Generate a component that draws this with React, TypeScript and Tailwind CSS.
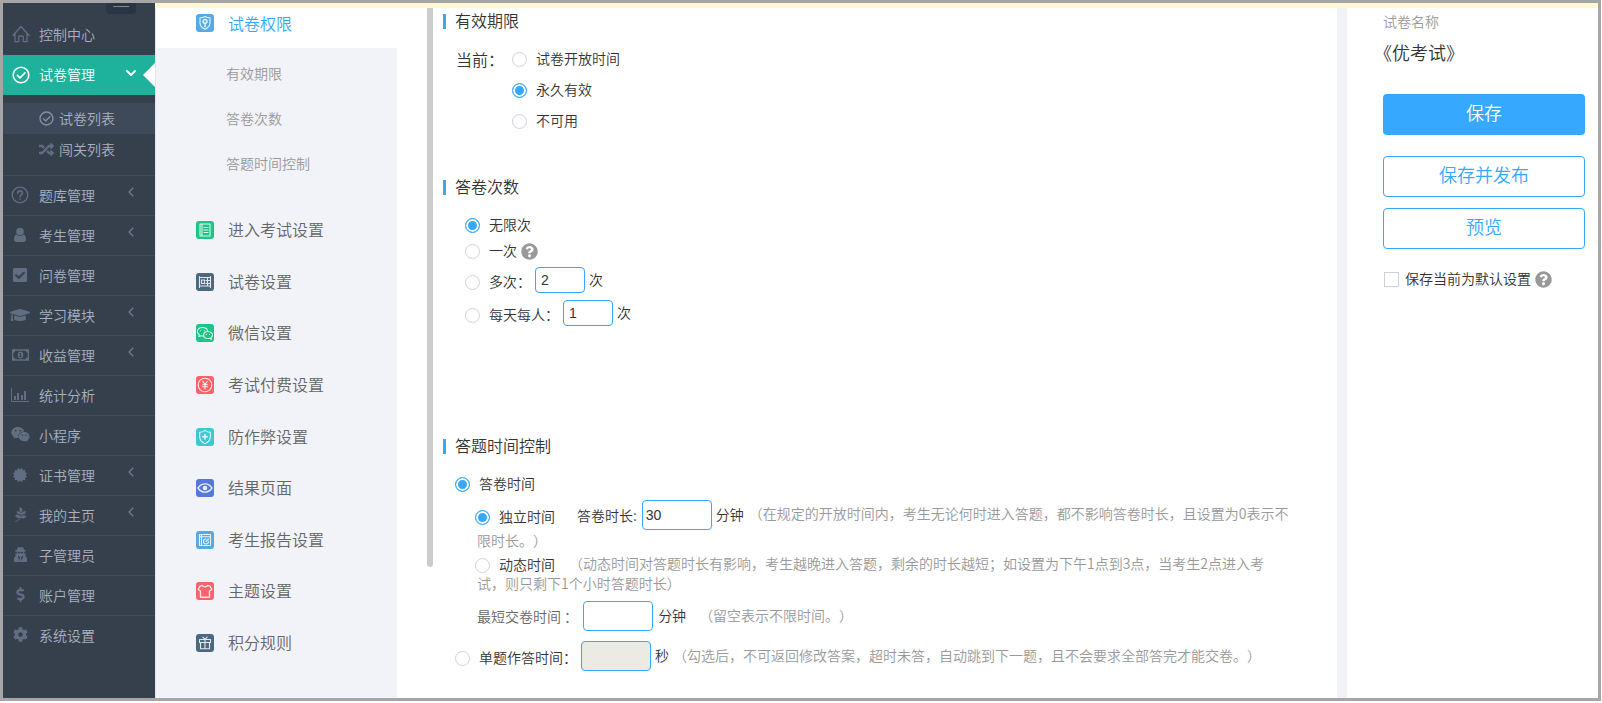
import { useState, type ReactNode } from "react";
import {
  FaCertificate,
  FaCheckSquare,
  FaCog,
  FaDollarSign,
  FaGraduationCap,
  FaPagelines,
  FaQuestionCircle,
  FaRandom,
  FaUserSecret,
  FaWeixin,
} from "react-icons/fa";

const stroke = {
  fill: "none",
  stroke: "currentColor",
  strokeLinecap: "round",
  strokeLinejoin: "round",
} as const;

const HomeIcon = () => (
  <svg viewBox="0 0 18 18" className="size-[18px]" {...stroke} strokeWidth={1.2}>
    <path d="M1 10.5 9 1.5l8 9M3 8.5v8.2h3.8v-5.5h4.4v5.5H15V8.5" />
  </svg>
);

const CheckIcon = ({ className }: { className: string }) => (
  <svg viewBox="0 0 18 18" className={className} {...stroke} strokeWidth={1.6}>
    <circle cx="9" cy="9" r="7.8" />
    <path d="m5.4 9.4 2.6 2.5 5-5" />
  </svg>
);

const HelpIcon = () => (
  <svg viewBox="0 0 18 18" className="size-[18px]" {...stroke} strokeWidth={1.3}>
    <circle cx="9" cy="9" r="7.8" />
    <path d="M6.7 7.2c0-3.1 4.7-3 4.7-.2 0 1.8-2.3 1.8-2.3 3.8M9.1 13v.3" strokeWidth={1.6} />
  </svg>
);

const UserIcon = () => (
  <svg viewBox="0 0 14 16" className="h-[16px] w-[14px]" fill="currentColor">
    <circle cx="7" cy="4.6" r="3.8" />
    <path d="M3.8 7.4C1.7 7.6 1 10 1 12.6 1 14.2 2 15 3.3 15h7.4c1.3 0 2.3-.8 2.3-2.4 0-2.6-.7-5-2.8-5.2C8.5 9.5 5.5 9.5 3.8 7.4z" />
  </svg>
);

const MoneyIcon = () => (
  <svg viewBox="0 0 20 14" className="h-[14px] w-[19px]" fill="currentColor" fillRule="evenodd">
    <path d="M1 1h18v12H1zM4.6 2.4A2.4 2.4 0 0 1 2.4 4.6v4.8a2.4 2.4 0 0 1 2.2 2.2h10.8a2.4 2.4 0 0 1 2.2-2.2V4.6a2.4 2.4 0 0 1-2.2-2.2z" />
    <path d="M10 3.2c2 0 3 1.8 3 3.8s-1 3.8-3 3.8S7 9 7 7s1-3.8 3-3.8zM9.5 5l-1.2.9.5.6.6-.4v2.3h-.9v.8h2.8v-.8h-.8V5z" />
  </svg>
);

const ChartIcon = () => (
  <svg viewBox="0 0 20 16" className="h-[16px] w-[20px]" fill="currentColor">
    <path d="M1 1h1v13h17v1H1zM4 9h2v4H4zM7 6h2v7H7zM11 8h2v5h-2zM14 4h2v9h-2z" />
  </svg>
);

const Angle = ({ open }: { open?: boolean }) => (
  <svg
    viewBox="0 0 10 10"
    className={`mr-[19px] mb-[5px] ml-auto size-[10px] ${open ? "text-white" : "text-[#748094]"}`}
    {...stroke}
    strokeWidth={open ? 1.8 : 1.1}
  >
    <path d={open ? "M1 3l4 4 4-4" : "M7 1 3 5l4 4"} />
  </svg>
);

type NavItem = { label: string; icon: ReactNode; more?: boolean };

const navItems: NavItem[] = [
  { label: "题库管理", icon: <HelpIcon />, more: true },
  { label: "考生管理", icon: <UserIcon />, more: true },
  { label: "问卷管理", icon: <FaCheckSquare className="size-[16px]" /> },
  { label: "学习模块", icon: <FaGraduationCap className="size-[20px]" />, more: true },
  { label: "收益管理", icon: <MoneyIcon />, more: true },
  { label: "统计分析", icon: <ChartIcon /> },
  { label: "小程序", icon: <FaWeixin className="size-[19px]" /> },
  { label: "证书管理", icon: <FaCertificate className="size-[14px]" />, more: true },
  { label: "我的主页", icon: <FaPagelines className="size-[15px]" />, more: true },
  { label: "子管理员", icon: <FaUserSecret className="size-[15px]" /> },
  { label: "账户管理", icon: <FaDollarSign className="size-[15px]" /> },
  { label: "系统设置", icon: <FaCog className="size-[15px]" /> },
];

const Badge = ({ className, children }: { className: string; children: ReactNode }) => (
  <svg viewBox="0 0 18 18" className={`size-[18px] shrink-0 rounded-[3px] text-white/85 ${className}`} {...stroke} strokeWidth={1.1}>
    {children}
  </svg>
);

const settings: { label: string; icon: ReactNode }[] = [
  {
    label: "进入考试设置",
    icon: (
      <Badge className="bg-[#1dc486]">
        <path d="M4 3h10v12H4zM6 3v12M8 6.5h4M8 9h4M8 11.5h4" />
      </Badge>
    ),
  },
  {
    label: "试卷设置",
    icon: (
      <Badge className="bg-[#4a687e]">
        <path d="M3.5 3.5v11M3.5 4.5h11M14.5 3.5v11M3.5 13h11M5.5 7h3v3.5h-3zM11.5 4.5v8.5M10 7.5h4M10 10.5h4" />
      </Badge>
    ),
  },
  {
    label: "微信设置",
    icon: (
      <Badge className="bg-[#1dc486]">
        <path d="M7.5 12c-.9.1-1.8 0-2.6-.3l-2.1.9.5-1.9C-.2 8 1.5 3.5 6.3 3.5c3.2 0 5.2 1.9 5.5 4M12 7.500c-5.800 0-5.800 7 0 7 .6 0 1.100-.1 1.600-.2l1.700.9-.4-1.600c3.200-2.100 1.300-6.100-2.900-6.100zM4.700 6.500v.1M8.200 6.500v.1M10.300 10.300v.1M13.500 10.300v.1" />
      </Badge>
    ),
  },
  {
    label: "考试付费设置",
    icon: (
      <Badge className="bg-[#ff6169]">
        <circle cx="9" cy="9" r="6.8" />
        <path d="m6.8 5.5 2.2 3 2.2-3M9 8.5v4.2M6.6 8.8h4.8M6.6 10.8h4.8" />
      </Badge>
    ),
  },
  {
    label: "防作弊设置",
    icon: (
      <Badge className="bg-[#41c7d3]">
        <path d="M9 2.3c1.5 1.3 3.2 2 5.3 2v4.5c0 3.5-2.3 5.7-5.3 7-3-1.3-5.3-3.5-5.3-7V4.3c2.1 0 3.8-.7 5.3-2z" />
        <path d="M9 6.5v4.4M6.8 8.7h4.4" strokeWidth={1.5} />
      </Badge>
    ),
  },
  {
    label: "结果页面",
    icon: (
      <Badge className="bg-[#5677db]">
        <path d="M2 9c3.5-5.5 10.5-5.5 14 0-3.5 5.5-10.5 5.5-14 0z" strokeWidth={1.4} />
        <circle cx="9" cy="9" r="1.7" fill="currentColor" />
      </Badge>
    ),
  },
  {
    label: "考生报告设置",
    icon: (
      <Badge className="bg-[#55aae6]">
        <path d="M3.5 3.5h11v11h-11zM3.5 5.8h11M5.5 3.5v11" />
        <path d="M10 8a2.5 2.5 0 1 0 2.5 2.5M10 10.5l2.5-2.5" />
      </Badge>
    ),
  },
  {
    label: "主题设置",
    icon: (
      <Badge className="bg-[#ff6169]">
        <path d="M6.5 3.5c1 1.800 4 1.800 5 0l2.500.7 1.800 3.300L13.500 9v6.200h-9V9L2.200 7.500 4 4.200z" strokeWidth={1.4} />
      </Badge>
    ),
  },
  {
    label: "积分规则",
    icon: (
      <Badge className="bg-[#4a687e]">
        <path d="M3.5 5.5h11v3h-11zM4.5 8.5v6.2h9V8.5M9 5.5v9.2M6.800 3.200 9 5.300l2.200-2.100" />
      </Badge>
    ),
  },
];

function Radio(props: {
  name: string;
  value: string;
  current: string;
  onPick: (value: string) => void;
  children: ReactNode;
}) {
  return (
    <label className="inline-flex items-center gap-[9px]">
      <input
        type="radio"
        name={props.name}
        checked={props.current === props.value}
        onChange={() => props.onPick(props.value)}
        className="size-[15px] shrink-0 appearance-none rounded-full border border-[#cdd2da] bg-white checked:border-[#36a9ff] checked:bg-[#36a9ff] checked:shadow-[inset_0_0_0_2px_white]"
      />
      <Text>{props.children}</Text>
    </label>
  );
}

const Text = ({ className = "", children }: { className?: string; children: ReactNode }) => (
  <span className={`pb-[2px] leading-[18px] ${className}`}>{children}</span>
);

const SectionTitle = ({ children }: { children: ReactNode }) => (
  <h2 className="flex h-6 items-start gap-[9px] text-base leading-[22px] font-[350]">
    <span className="mt-[5px] h-[15px] w-[3px] bg-[#36a9ff]" />
    {children}
  </h2>
);

const Question = () => <FaQuestionCircle className="size-[17px] shrink-0 text-[#999]" />;

const countInput = "h-[26px] w-[50px] rounded-[4px] border border-[#36a9ff] px-[5px] font-['Liberation_Sans',sans-serif] text-sm";
const timeInput = "h-[30px] w-[70px] rounded-[4px] border border-[#36a9ff] px-[3px] font-['Liberation_Sans',sans-serif] text-sm";

export default function App() {
  const [validity, setValidity] = useState("forever");
  const [times, setTimes] = useState("unlimited");
  const [timing, setTiming] = useState("paper");
  const [mode, setMode] = useState("independent");

  return (
    <div className="flex min-h-screen flex-col bg-white pr-px pb-[2px] font-['Noto_Sans_CJK_SC',sans-serif] text-sm font-[350] text-[#333] [text-spacing-trim:space-all]">
      <div className="flex flex-1 border-[3px] border-[#a6a6a6]">
        <nav className="w-[152px] shrink-0 bg-[#36404d] text-[#a7b1c2]">
          <div className="flex h-[12px] justify-end pr-[19px]">
            <button aria-label="收起菜单" className="flex h-[11px] w-[30px] justify-center rounded-b-[4px] bg-[#2b3543] pt-[3px]">
              <span className="h-px w-4 bg-[#7c8695]" />
            </button>
          </div>
          <a href="#" className="flex h-10 items-center gap-2 pb-[2px] pl-2">
            <span className="flex w-5 justify-center text-[#64718a]">
              <HomeIcon />
            </span>
            控制中心
          </a>
          <a href="#" className="relative flex h-10 items-center gap-2 bg-[#1eb19b] pl-2 text-white">
            <span className="flex w-5 justify-center">
              <CheckIcon className="size-[18px]" />
            </span>
            <Text>试卷管理</Text>
            <Angle open />
            <span className="absolute top-2 right-0 border-y-[12px] border-r-[12px] border-y-transparent border-r-white" />
          </a>
          <div className="pt-2 pb-[10px]">
            <a href="#" className="flex h-[31px] items-center gap-[5px] bg-[#3e4959] pl-9">
              <CheckIcon className="size-[15px] text-[#8591a5]" />
              <Text>试卷列表</Text>
            </a>
            <a href="#" className="flex h-[31px] items-center gap-[5px] pl-9">
              <FaRandom className="size-[15px] text-[#616d80]" />
              <Text>闯关列表</Text>
            </a>
          </div>
          {navItems.map((item) => (
            <a key={item.label} href="#" className="flex h-10 items-center gap-[9px] border-t border-[#414c5a] pb-[2px] pl-[7px]">
              <span className="flex w-5 shrink-0 justify-center text-[#616d80]">{item.icon}</span>
              {item.label}
              {item.more && <Angle />}
            </a>
          ))}
        </nav>

        <div className="flex min-w-0 flex-1 flex-col">
          <div className="h-[5px] bg-[#fff9d6]" />
          <div className="flex flex-1">
            <aside className="w-[242px] shrink-0 border-l border-[#e4e5ea] bg-[#f2f3f8] text-base text-[#666]">
              <a href="#" className="flex h-10 items-center gap-[14px] bg-white pb-[10px] pl-10 text-[#36a9ff]">
                <Badge className="bg-[#55aae6]">
                  <path d="M9 2.5c1.5 1 3 1.3 5 1.3v5c0 3.3-2.2 5.3-5 6.5-2.8-1.2-5-3.2-5-6.5v-5c2 0 3.5-.3 5-1.3z" />
                  <path d="M9 9.5a2 2 0 1 1 .1 0v3.3" strokeWidth={1.5} />
                </Badge>
                试卷权限
              </a>
              <div className="flex flex-col gap-[25px] pt-[15px] pl-[70px] text-sm text-[#999]">
                <a href="#" className="leading-5">有效期限</a>
                <a href="#" className="leading-5">答卷次数</a>
                <a href="#" className="leading-5">答题时间控制</a>
              </div>
              <div className="mt-12 flex h-[431px] flex-col justify-between pl-10">
                {settings.map((item) => (
                  <a key={item.label} href="#" className="flex h-[18px] items-center gap-[14px]">
                    {item.icon}
                    <Text>{item.label}</Text>
                  </a>
                ))}
              </div>
            </aside>

            <main className="ml-[30px] flex min-w-0 flex-1">
              <div className="h-[559px] w-[6px] shrink-0 rounded-b-[3px] bg-[#ccc]" />
              <div className="min-w-0 flex-1 pt-px pr-[47px] pl-[10px]">
                <section className="h-[166px]">
                  <SectionTitle>有效期限</SectionTitle>
                  <div className="flex items-start gap-2 pt-4 pl-[13px]">
                    <span className="text-base leading-5">当前：</span>
                    <div className="flex flex-col gap-[11px]">
                      <Radio name="validity" value="open" current={validity} onPick={setValidity}>试卷开放时间</Radio>
                      <Radio name="validity" value="forever" current={validity} onPick={setValidity}>永久有效</Radio>
                      <Radio name="validity" value="disabled" current={validity} onPick={setValidity}>不可用</Radio>
                    </div>
                  </div>
                </section>

                <section className="h-[259px]">
                  <SectionTitle>答卷次数</SectionTitle>
                  <div className="flex flex-col items-start pt-4 pl-[22px]">
                    <Radio name="times" value="unlimited" current={times} onPick={setTimes}>无限次</Radio>
                    <div className="mt-[6px] flex items-center gap-1">
                      <Radio name="times" value="once" current={times} onPick={setTimes}>一次</Radio>
                      <Question />
                    </div>
                    <div className="mt-[6px] flex items-center gap-1 [&>label]:pt-1">
                      <Radio name="times" value="many" current={times} onPick={setTimes}>多次：</Radio>
                      <input aria-label="多次" defaultValue="2" className={countInput} />
                      <Text>次</Text>
                    </div>
                    <div className="mt-[7px] flex items-center gap-1 [&>label]:pt-1">
                      <Radio name="times" value="daily" current={times} onPick={setTimes}>每天每人：</Radio>
                      <input aria-label="每天每人" defaultValue="1" className={countInput} />
                      <Text>次</Text>
                    </div>
                  </div>
                </section>

                <section>
                  <SectionTitle>答题时间控制</SectionTitle>
                  <div className="flex flex-col items-start pt-4 pl-3">
                    <Radio name="timing" value="paper" current={timing} onPick={setTiming}>答卷时间</Radio>
                    <div className="pt-[6px] pl-[22px]">
                      <p className="leading-5 text-[#999]">
                        <span className="mr-[5px] -ml-[2px] inline-flex items-center align-middle text-[#333] [&>label:first-child]:pt-1">
                          <Radio name="mode" value="independent" current={mode} onPick={setMode}>独立时间</Radio>
                          <label htmlFor="duration" className="mr-[5px] ml-[22px]">答卷时长:</label>
                          <input id="duration" defaultValue="30" className={timeInput} />
                          <Text className="ml-1">分钟</Text>
                        </span>
                        （在规定的开放时间内，考生无论何时进入答题，都不影响答卷时长，且设置为0表示不限时长。）
                      </p>
                      <p className="mt-[5px] leading-4 text-[#999]">
                        <span className="mr-[14px] -ml-[2px] inline-flex align-middle text-[#333]">
                          <Radio name="mode" value="dynamic" current={mode} onPick={setMode}>动态时间</Radio>
                        </span>
                        （动态时间对答题时长有影响，考生越晚进入答题，剩余的时长越短；如设置为下午1点到3点，当考生2点进入考试，则只剩下1个小时答题时长）
                      </p>
                      <div className="mt-[10px] flex items-center gap-[5px]">
                        <label htmlFor="shortest" className="text-[#666]">最短交卷时间 ：</label>
                        <input id="shortest" className={timeInput} />
                        <Text>分钟</Text>
                        <Text className="ml-2 text-[#999]">（留空表示不限时间。）</Text>
                      </div>
                    </div>
                    <div className="mt-[10px] flex items-center gap-1 [&>label]:pt-1">
                      <Radio name="timing" value="single" current={timing} onPick={setTiming}>单题作答时间：</Radio>
                      <input aria-label="单题作答时间" disabled className={`${timeInput} bg-[#ebebe4]`} />
                      <Text>秒</Text>
                      <Text className="text-[#999]">（勾选后，不可返回修改答案，超时未答，自动跳到下一题，且不会要求全部答完才能交卷。）</Text>
                    </div>
                  </div>
                </section>
              </div>
            </main>

            <aside className="w-[261px] shrink-0 border-l-[10px] border-[#f2f3f8] pt-[3px] pr-[13px] pl-9">
              <p className="leading-5 text-[#999]">试卷名称</p>
              <h1 className="mt-[7px] text-lg leading-7 font-[350] [text-spacing-trim:trim-start]">《优考试》</h1>
              <button className="mt-7 h-[41px] w-full rounded-[4px] bg-[#36a9ff] pb-[5px] text-lg text-white">保存</button>
              <button className="mt-[21px] h-[41px] w-full rounded-[4px] border border-[#36a9ff] pb-[5px] text-lg text-[#36a9ff]">保存并发布</button>
              <button className="mt-[11px] h-[41px] w-full rounded-[4px] border border-[#36a9ff] pb-[5px] text-lg text-[#36a9ff]">预览</button>
              <div className="mt-5 flex items-center gap-1 pl-px">
                <label className="flex items-center gap-[6px]">
                  <input type="checkbox" className="size-[15px] appearance-none border border-[#cdd2da] bg-white checked:bg-[#36a9ff]" />
                  <Text>保存当前为默认设置</Text>
                </label>
                <Question />
              </div>
            </aside>
          </div>
        </div>
      </div>
    </div>
  );
}
